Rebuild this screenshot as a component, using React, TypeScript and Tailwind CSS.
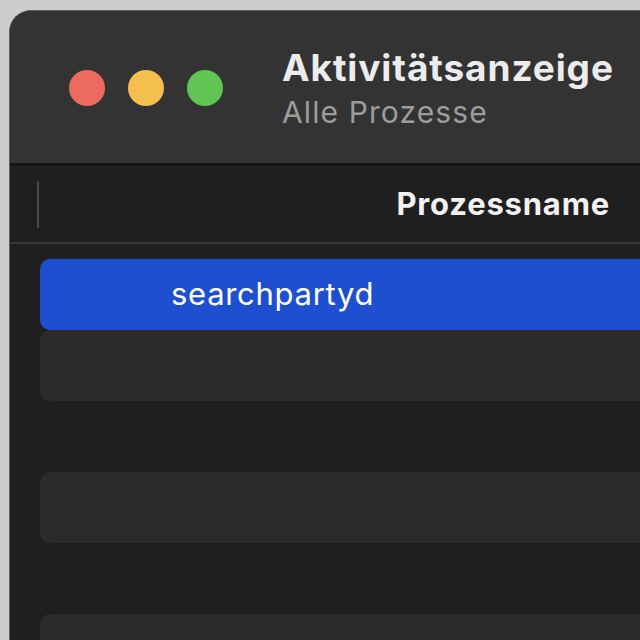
const font = { fontFamily: 'Inter, "Noto Sans", sans-serif' }

const rows = [0, 1, 2, 3, 4, 5]

export default function App() {
  return (
    <div className="w-[640px] h-[640px] overflow-hidden bg-[#cdcdcd] pl-[9px] pt-[10px]" style={font}>
      <div className="h-[700px] w-[700px] rounded-tl-[22px] border-l border-t border-[#5e5e5e] bg-[#1e1f1e] overflow-hidden flex flex-col">
        {/* Title bar */}
        <div className="h-[155px] shrink-0 bg-[#333333] border-b-[3px] border-[#141414] flex items-start pl-[59px]">
          <div className="flex gap-[23px] mt-[59px]">
            <div className="w-9 h-9 rounded-full bg-[#ed6a5e]" />
            <div className="w-9 h-9 rounded-full bg-[#f5bf4f]" />
            <div className="w-9 h-9 rounded-full bg-[#61c554]" />
          </div>
          <div className="ml-[59px] mt-[37px] flex flex-col">
            <div className="text-[37px] leading-[40px] font-bold text-[#ececec] tracking-[0.9px]">Aktivitätsanzeige</div>
            <div className="text-[30px] leading-[34px] mt-[7px] text-[#9c9c9c] tracking-[1.1px]">Alle Prozesse</div>
          </div>
        </div>

        {/* Column header */}
        <div className="h-[78px] shrink-0 border-b-2 border-[#383838] flex items-center">
          <div className="ml-[27px] w-[2px] h-[47px] bg-[#4a4a4a]" />
          <div className="w-[571px] text-right text-[31px] font-bold text-[#f2f2f2] tracking-[0.8px]">Prozessname</div>
        </div>

        {/* Rows */}
        <div className="pt-[15px] pl-[30px] flex flex-col">
          {rows.map(i => (
            <div
              key={i}
              className={`h-[71px] rounded-l-[10px] flex items-center pl-[131px] text-[31px] tracking-[0.7px] ${
                i === 0 ? 'bg-[#1e4fd0] text-white' : i % 2 === 1 ? 'bg-[#2a2b2a]' : ''
              }`}
            >
              {i === 0 ? 'searchpartyd' : ''}
            </div>
          ))}
        </div>
      </div>
    </div>
  )
}
